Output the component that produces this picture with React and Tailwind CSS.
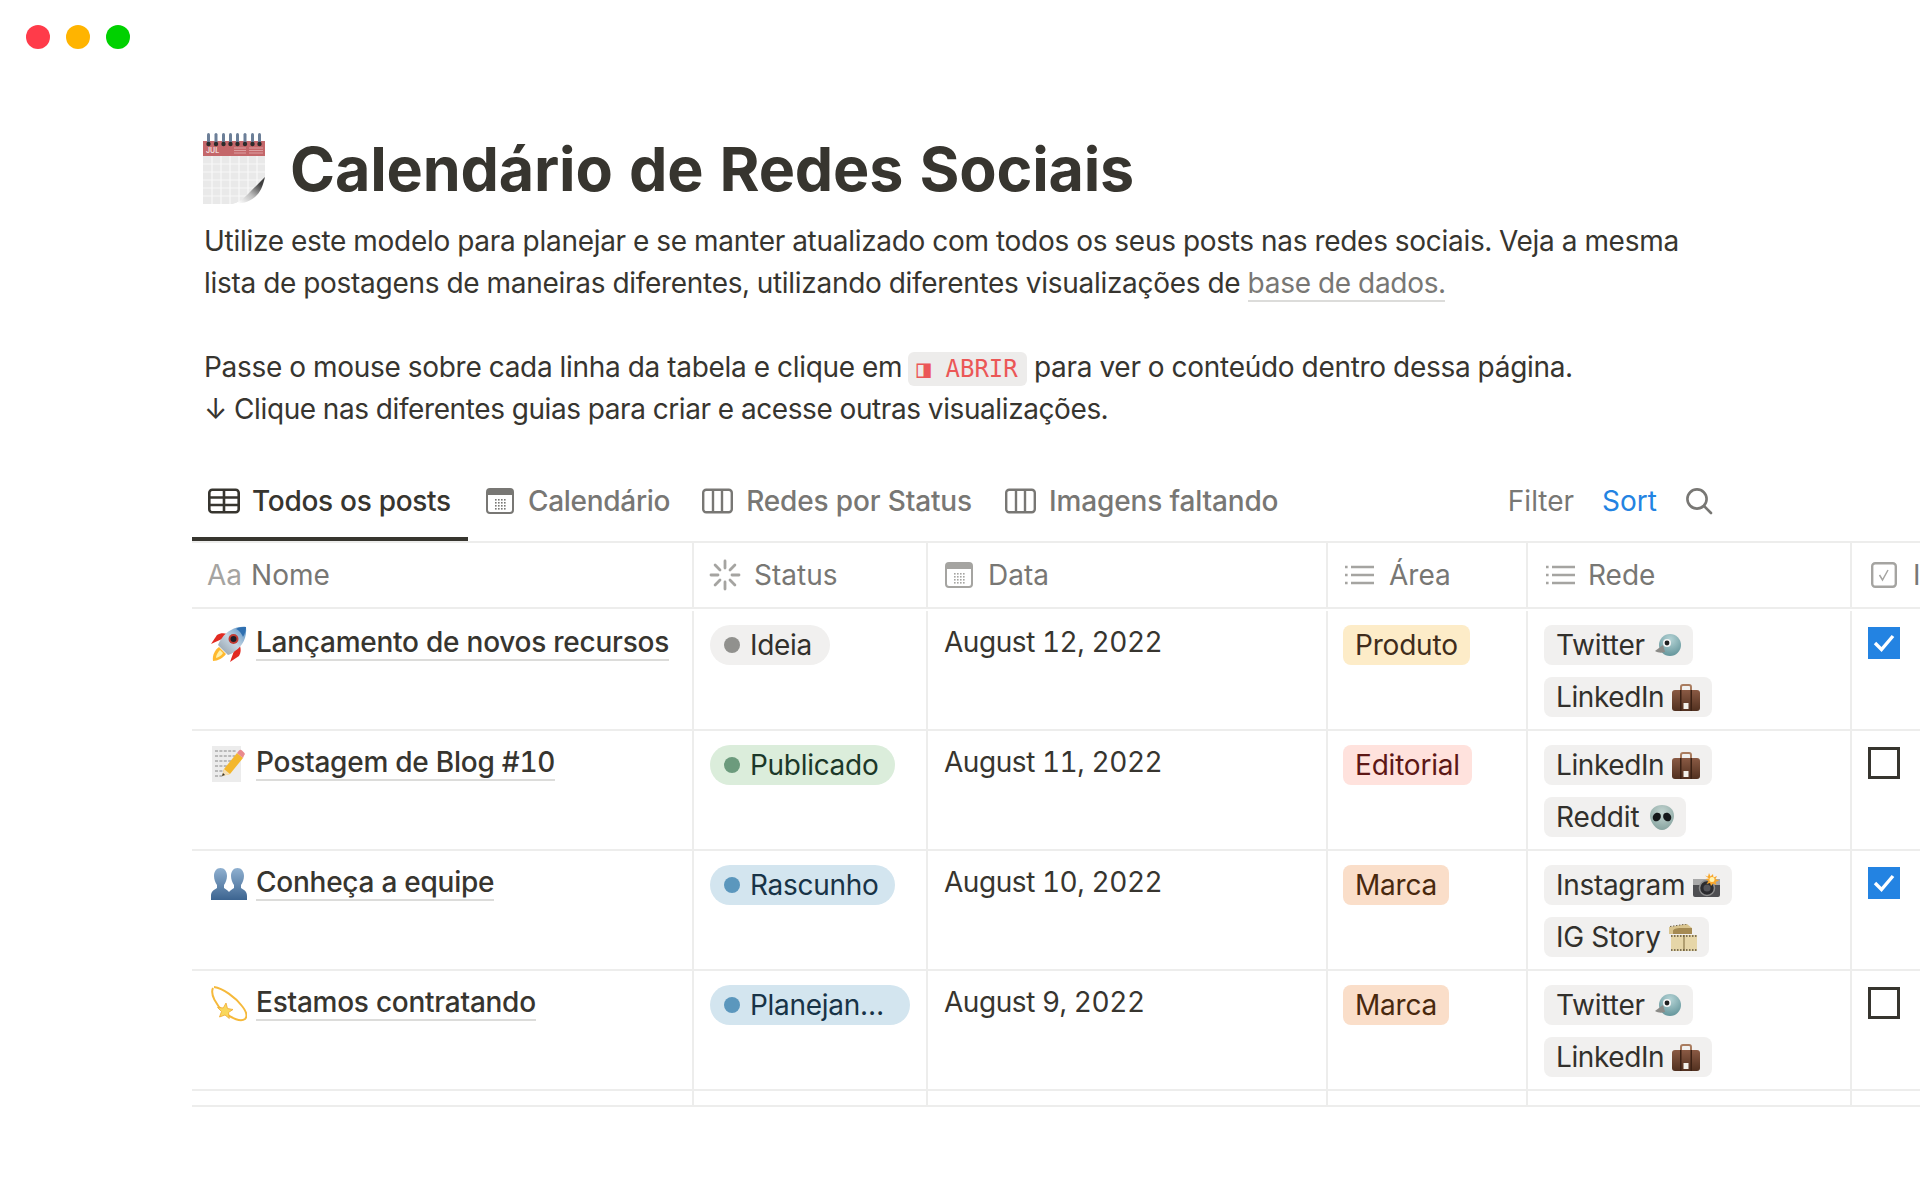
const gridCols = "grid-cols-[502px_234px_400px_200px_324px_100px]";

const TableIcon = () => (
  <svg className="shrink-0" width="32" height="26" viewBox="0 0 32 26" fill="none" stroke="#37352f" strokeWidth="2.6">
    <rect x="1.3" y="1.8" width="29.4" height="22.4" rx="3" />
    <path d="M1.3 9.5h29.4M1.3 17h29.4M16 1.8v22.4" />
  </svg>
);

const CalendarIcon = ({ color = "#787774", width = 28, height = 26 }) => (
  <svg className="shrink-0" width={width} height={height} viewBox="0 0 28 26" fill="none">
    <rect x="1" y="1" width="26" height="24" rx="3" stroke={color} strokeWidth="2" />
    <path d="M1 4a3 3 0 0 1 3-3h20a3 3 0 0 1 3 3v3H1z" fill={color} />
    {[9, 12, 15, 18].map((x) => [11, 14, 17, 20].map((y) => (
      <rect key={`${x}-${y}`} x={x} y={y} width="1.6" height="1.6" fill={color} />
    )))}
  </svg>
);

const ColumnsIcon = () => (
  <svg className="shrink-0" width="31" height="26" viewBox="0 0 31 26" fill="none" stroke="#787774" strokeWidth="2.4">
    <rect x="1.2" y="1.8" width="28.6" height="22.4" rx="3" />
    <path d="M11 1.8v22.4M20 1.8v22.4" />
  </svg>
);

const SearchIcon = () => (
  <svg className="shrink-0" width="28" height="28" viewBox="0 0 28 28" fill="none" stroke="#787774" strokeWidth="2.6" strokeLinecap="round">
    <circle cx="12" cy="12" r="9.6" />
    <path d="M19 19l7 7" />
  </svg>
);

const SpinnerIcon = () => (
  <svg className="shrink-0" width="32" height="32" viewBox="0 0 32 32" fill="none" stroke="#a5a4a1" strokeWidth="2.8" strokeLinecap="round">
    <path d="M16 2v7M16 23v7M2 16h7M23 16h7M6.1 6.1l4.9 4.9M21 21l4.9 4.9M6.1 25.9L11 21M21 11l4.9-4.9" />
  </svg>
);

const ListIcon = () => (
  <svg className="shrink-0" width="29" height="20" viewBox="0 0 29 20" fill="none" stroke="#a5a4a1" strokeWidth="2.4">
    <path d="M6 2h23M6 10h23M6 18h23" />
    <path d="M0 2h2.6M0 10h2.6M0 18h2.6" />
  </svg>
);

const CheckHeadIcon = () => (
  <svg className="shrink-0" width="26" height="26" viewBox="0 0 26 26" fill="none" stroke="#a5a4a1">
    <rect x="1.2" y="1.2" width="23.6" height="23.6" rx="3" strokeWidth="2.4" />
    <path d="M8.5 13l3 5 5.5-10" strokeWidth="1.5" />
  </svg>
);

const AaIcon = () => <span className="text-[#a5a4a1]">Aa</span>;

const CalendarEmoji = () => (
  <svg className="shrink-0" width="62" height="71" viewBox="0 0 62 71">
    <defs>
      <linearGradient id="curl" x1="0.2" y1="1" x2="0.9" y2="0.3">
        <stop offset="0" stopColor="#ffffff" />
        <stop offset="0.5" stopColor="#bdbdbd" />
        <stop offset="1" stopColor="#3f3f3f" />
      </linearGradient>
    </defs>
    <rect x="0" y="23" width="62" height="48" fill="#e9e9e9" />
    <g stroke="#f8f8f8" strokeWidth="1.2">
      <path d="M9 23v48M18 23v48M27 23v48M36 23v48M45 23v48M54 23v48M0 31h62M0 39h62M0 47h62M0 55h62M0 63h62" />
    </g>
    <rect x="0" y="8" width="62" height="15" fill="#c4676a" />
    <text x="3" y="20" fontSize="7" fontWeight="700" fill="#eed6d6">JUL</text>
    <path d="M31 15h12M31 17.500h12M31 20h12M46 15h14M46 17.500h14M46 20h14" stroke="#dca0a2" strokeWidth="1.200" />
    {[4, 11.5, 19, 26, 33, 40.5, 48, 55].map((x) => (
      <g key={x}>
        <rect x={x} y="0" width="3" height="12" rx="1.500" fill="#6c7f98" />
        <circle cx={x + 1.5} cy="11" r="2.200" fill="#2b2b2b" />
      </g>
    ))}
    <path d="M30 71c13-4 24-14 32-27v27z" fill="#ffffff" />
    <path d="M30 71c6-1 11-6 17-12 6-6 10-10 15-15-2 9-5 16-10 20-6 5-14 7-22 7z" fill="url(#curl)" />
  </svg>
);

const RocketEmoji = () => (
  <svg className="shrink-0" width="36" height="36" viewBox="0 0 36 36">
    <defs>
      <linearGradient id="rk" x1="0" y1="1" x2="1" y2="0">
        <stop offset="0" stopColor="#8b98a3" />
        <stop offset="0.5" stopColor="#c7d6e2" />
        <stop offset="1" stopColor="#4f8dc4" />
      </linearGradient>
    </defs>
    <path d="M2 35c-1-6 2-11 6-14l7 7c-3 4-8 7-13 7z" fill="#ffb92e" />
    <path d="M5 32c0-3 2-6 4-8l3 3c-2 3-4 4-7 5z" fill="#fff1a8" />
    <path d="M11 13L0 18l6-9c3-2 7-2 10-1z" fill="#e22b22" />
    <path d="M23 25l-4 11 9-6c2-3 2-7 1-10z" fill="#e22b22" />
    <path d="M35 1C25 0 16 5 11 12c-2 2-3 5-4 7l10 10c3-1 5-2 7-4 8-5 12-14 11-24z" fill="url(#rk)" />
    <path d="M35 1c-4 0-7 0-10 2 3 1 6 5 7 8 2-3 3-7 3-10z" fill="#2f6fb0" />
    <circle cx="22.500" cy="13" r="5" fill="#c23b33" />
    <circle cx="22.500" cy="13" r="3" fill="#1e1e28" />
  </svg>
);

const MemoEmoji = () => (
  <svg className="shrink-0" width="34" height="36" viewBox="0 0 34 36">
    <rect x="1" y="0" width="29" height="36" fill="#ececec" />
    <g stroke="#7d7d7d" strokeWidth="0.9" strokeDasharray="3 1.400">
      <path d="M4 5h22M4 10h20M4 15h16M4 20h12M4 25h9M4 30h8" />
    </g>
    <path d="M11 30l2-7L26 7l6 5-13 16z" fill="#f3b72d" />
    <path d="M11 30l2-7 6 5z" fill="#f5dfb5" />
    <path d="M11 30l1-3 2 2z" fill="#333333" />
    <path d="M26 7l2-2.500a2 2 0 0 1 3 0l2 2a2 2 0 0 1 0 3L32 12z" fill="#e98a8e" />
  </svg>
);

const BustsEmoji = () => (
  <svg className="shrink-0" width="36" height="32" viewBox="0 0 36 32">
    <defs>
      <linearGradient id="bust" x1="0" y1="0" x2="0" y2="1">
        <stop offset="0" stopColor="#8fb0d0" />
        <stop offset="1" stopColor="#3c6490" />
      </linearGradient>
    </defs>
    <path d="M9.500 0c4 0 6.500 3.500 6.500 8 0 3.500-1.500 7-3 9v3c2 1.500 4 2.500 5 4 1-1.500 3-2.500 5-4v-3c-1.500-2-3-5.500-3-9 0-4.500 2.500-8 6.500-8s6.500 3.500 6.500 8c0 3.500-1.500 7-3 9v3c3 2 6 3 6 8v4H0v-4c0-5 3-6 6-8v-3c-1.500-2-3-5.500-3-9 0-4.500 2.500-8 6.500-8z" fill="url(#bust)" />
  </svg>
);

const DizzyEmoji = () => (
  <svg className="shrink-0" width="36" height="36" viewBox="0 0 36 36" fill="none">
    <path d="M2 2c-3 6 3 17 11 24 8 7 17 10 21 7 3-3 1-8-3-13C25 12 12 2 3 1" stroke="#f5b93b" strokeWidth="2" />
    <path d="M15 17l1.500 5.500 5.500 1-4.500 3 .8 6-4.300-3.500-5.500 2 2-5.500-4-4 5.800.4z" fill="#f9d75b" stroke="#f0a92e" strokeWidth="0.8" />
  </svg>
);

const BirdEmoji = () => (
  <svg className="shrink-0" width="26" height="22" viewBox="0 0 26 22">
    <defs>
      <radialGradient id="bird" cx="0.5" cy="0.25" r="0.8">
        <stop offset="0" stopColor="#b6d4d6" />
        <stop offset="1" stopColor="#5f9298" />
      </radialGradient>
    </defs>
    <circle cx="15" cy="11" r="11" fill="url(#bird)" />
    <path d="M8 11L0 17c3 2 7 2 10 1z" fill="#8b8b88" />
    <circle cx="12" cy="9" r="4" fill="#f4f4f4" />
    <circle cx="12" cy="9" r="2.400" fill="#1f1f1f" />
  </svg>
);

const BriefcaseEmoji = () => (
  <svg className="shrink-0" width="28" height="27" viewBox="0 0 28 27">
    <defs>
      <linearGradient id="case" x1="0" y1="0" x2="0" y2="1">
        <stop offset="0" stopColor="#8a5a44" />
        <stop offset="1" stopColor="#51301f" />
      </linearGradient>
    </defs>
    <path d="M9 6V3a2 2 0 0 1 2-2h6a2 2 0 0 1 2 2v3" fill="none" stroke="#a97c5f" strokeWidth="2" />
    <rect x="0" y="6" width="28" height="21" rx="3" fill="url(#case)" />
    <path d="M8 6h1.500v21H8zM18.500 6H20v21h-1.500z" fill="#3b2114" />
    <rect x="11.500" y="19" width="5" height="6" fill="#f2f0ea" />
  </svg>
);

const AlienEmoji = () => (
  <svg className="shrink-0" width="24" height="25" viewBox="0 0 24 25">
    <defs>
      <radialGradient id="alien" cx="0.5" cy="0.3" r="0.8">
        <stop offset="0" stopColor="#c5d6d2" />
        <stop offset="1" stopColor="#7f9d99" />
      </radialGradient>
    </defs>
    <path d="M12 0c7 0 12 4 12 11 0 6-6 14-12 14S0 17 0 11C0 4 5 0 12 0z" fill="url(#alien)" />
    <ellipse cx="6.800" cy="12" rx="3.800" ry="4.600" transform="rotate(35 6.800 12)" fill="#15181a" />
    <ellipse cx="17.200" cy="12" rx="3.800" ry="4.600" transform="rotate(-35 17.200 12)" fill="#15181a" />
  </svg>
);

const CameraEmoji = () => (
  <svg className="shrink-0" width="27" height="24" viewBox="0 0 27 24">
    <rect x="0" y="6" width="27" height="18" rx="2" fill="#4f4f52" />
    <rect x="0" y="6" width="27" height="6" fill="#a9a9a9" />
    <circle cx="14" cy="15" r="7.500" fill="#2b2b2e" stroke="#8d8d8d" strokeWidth="1.500" />
    <circle cx="14" cy="15" r="3.500" fill="#55555a" />
    <path d="M16 0l1.500 3.500L20 1l.5 3.500L24 3l-1.500 3L26 7.500 22.500 9l1 3-3.500-1.500L18 13l-1-3-3.500 1 2-3-3-2 3.500-.500L12 2.500l3 1z" fill="#f9a72b" />
    <circle cx="19" cy="6.500" r="2.500" fill="#fff3b0" />
  </svg>
);

const FilmEmoji = () => (
  <svg className="shrink-0" width="28" height="27" viewBox="0 0 28 27">
    <path d="M0 3l18-3 5 4v6H0z" fill="#d9c48e" />
    <path d="M1 2.500l17-2.500" stroke="#6f6248" strokeWidth="1" strokeDasharray="1.500 1.500" />
    <path d="M4 7c0-2 3-3 8-3h11v6H4z" fill="#a58a52" />
    <rect x="2" y="11" width="26" height="16" fill="#e6d6a8" />
    <path d="M15 11v16" stroke="#8d7a4c" strokeWidth="1.200" />
    <path d="M2 12h26M2 26h26" stroke="#5c5039" strokeWidth="1.600" strokeDasharray="1.500 1.500" />
  </svg>
);

const Twitter = () => <Tag label="Twitter" emoji={<BirdEmoji />} extra="gap-[10px] tracking-[-0.2px]" />;
const LinkedIn = () => <Tag label="LinkedIn" emoji={<BriefcaseEmoji />} extra="gap-[8px] tracking-[-0.4px]" />;
const Reddit = () => <Tag label="Reddit" emoji={<AlienEmoji />} extra="gap-[10px] tracking-[-0.1px]" />;
const Instagram = () => <Tag label="Instagram" emoji={<CameraEmoji />} extra="gap-[8px] tracking-[-0.3px]" />;
const IgStory = () => <Tag label="IG Story" emoji={<FilmEmoji />} extra="gap-[8px] tracking-[-0.2px]" />;

const Tag = ({ label, emoji, extra }) => (
  <span className={`flex h-10 w-fit items-center rounded-lg bg-[#f1f0ef] px-3 text-[#32302c] ${extra}`}>
    {label}
    {emoji}
  </span>
);

const posts = [
  {
    name: "Lançamento de novos recursos",
    emoji: <RocketEmoji />,
    status: "Ideia",
    statusClass: "w-fit bg-[#f1f0ef] text-[#32302c] pr-[18px]",
    dotClass: "bg-[#91918e]",
    date: "August 12, 2022",
    area: "Produto",
    areaClass: "bg-[#fdecc8] text-[#402c1b]",
    tags: [<Twitter key="a" />, <LinkedIn key="b" />],
    checked: true,
  },
  {
    name: "Postagem de Blog #10",
    emoji: <MemoEmoji />,
    status: "Publicado",
    statusClass: "w-fit bg-[#dbeddb] text-[#1c3829] pr-[17px]",
    dotClass: "bg-[#6c9b7d]",
    date: "August 11, 2022",
    area: "Editorial",
    areaClass: "bg-[#ffe2dd] text-[#5d1715]",
    tags: [<LinkedIn key="a" />, <Reddit key="b" />],
    checked: false,
  },
  {
    name: "Conheça a equipe",
    emoji: <BustsEmoji />,
    status: "Rascunho",
    statusClass: "w-fit bg-[#d3e5ef] text-[#183347] pr-[17px]",
    dotClass: "bg-[#5b97bd]",
    date: "August 10, 2022",
    area: "Marca",
    areaClass: "bg-[#fadec9] text-[#49290e]",
    tags: [<Instagram key="a" />, <IgStory key="b" />],
    checked: true,
  },
  {
    name: "Estamos contratando",
    emoji: <DizzyEmoji />,
    status: "Planejan…",
    statusClass: "w-[200px] bg-[#d3e5ef] text-[#183347]",
    dotClass: "bg-[#5b97bd]",
    date: "August 9, 2022",
    area: "Marca",
    areaClass: "bg-[#fadec9] text-[#49290e]",
    tags: [<Twitter key="a" />, <LinkedIn key="b" />],
    checked: false,
  },
];

const columns = [
  { label: "Nome", icon: <AaIcon />, pad: "pl-[15px] gap-[9px]" },
  { label: "Status", icon: <SpinnerIcon />, pad: "pl-[15px] gap-[13px]" },
  { label: "Data", icon: <CalendarIcon color="#a5a4a1" />, pad: "pl-[17px] gap-[15px]" },
  { label: "Área", icon: <ListIcon />, pad: "pl-[17px] gap-[15px]" },
  { label: "Rede", icon: <ListIcon />, pad: "pl-[18px] gap-[13px]" },
  { label: "Imagem", icon: <CheckHeadIcon />, pad: "pl-[19px] gap-[16px]" },
];

const Checkbox = ({ checked }) =>
  checked ? (
    <span className="flex h-8 w-8 items-center justify-center bg-[#2383e2]">
      <svg width="22" height="18" viewBox="0 0 22 18" fill="none" stroke="#ffffff" strokeWidth="3.4">
        <path d="M2 9l6.500 6.500L20 2" />
      </svg>
    </span>
  ) : (
    <span className="block h-8 w-8 border-[3px] border-[#37352f]" />
  );

export default function App() {
  return (
    <div className="h-[1200px] w-[1920px] overflow-hidden bg-white text-[28px] leading-[42px] tabular-nums text-[#37352f] [font-family:Inter,sans-serif]">
      <div className="flex gap-4 pl-[26px] pt-[25px]">
        <span className="h-6 w-6 rounded-full bg-[#ff3b4a]" />
        <span className="h-6 w-6 rounded-full bg-[#ffb400]" />
        <span className="h-6 w-6 rounded-full bg-[#00d100]" />
      </div>

      <div className="pl-[192px] pt-[84px]">
        <div className="flex h-[71px] items-center pl-[11px]">
          <CalendarEmoji />
          <h1 className="ml-[25px] mt-[2px] text-[61px] font-bold leading-[71px] tracking-[-0.18px]">Calendário de Redes Sociais</h1>
        </div>

        <div className="whitespace-nowrap pl-[12px] pt-[16px] tracking-[-0.29px]">
          <p>Utilize este modelo para planejar e se manter atualizado com todos os seus posts nas redes sociais. Veja a mesma</p>
          <p>
            lista de postagens de maneiras diferentes, utilizando diferentes visualizações de{" "}
            <span className="border-b-2 border-[#dcdcda] text-[#787774]">base de dados.</span>
          </p>
          <p className="h-[42px]" />
          <p>
            Passe o mouse sobre cada linha da tabela e clique em{" "}
            <code className="ml-[-2px] rounded-md bg-[#edeceb] px-[9px] py-[3px] text-[24px] leading-none tracking-normal text-[#eb5757] [font-family:'DejaVu_Sans_Mono',monospace]">◨ ABRIR</code>{" "}
            para ver o conteúdo dentro dessa página.
          </p>
          <p className="tracking-[-0.4px]">↓ Clique nas diferentes guias para criar e acesse outras visualizações.</p>
        </div>

        <div className="mt-[39px] flex h-[72px] items-start text-[#787774]">
          <div className="flex h-[72px] w-[276px] items-center gap-[12px] border-b-4 border-[#37352f] pb-1 pl-4 font-medium tracking-[-0.3px] text-[#37352f]">
            <TableIcon />
            Todos os posts
          </div>
          <div className="ml-[18px] flex h-[64px] items-center gap-[14px] font-medium tracking-[-0.3px]">
            <CalendarIcon />
            Calendário
          </div>
          <div className="ml-[32px] flex h-[64px] items-center gap-[13px] font-medium tracking-[-0.15px]">
            <ColumnsIcon />
            Redes por Status
          </div>
          <div className="ml-[33px] flex h-[64px] items-center gap-[13px] font-medium tracking-[-0.15px]">
            <ColumnsIcon />
            Imagens faltando
          </div>
          <div className="ml-auto mr-[207px] flex h-[64px] items-center">
            <span className="mr-[28px]">Filter</span>
            <span className="mr-[28px] text-[#2383e2]">Sort</span>
            <SearchIcon />
          </div>
        </div>

        <div className={`grid h-[68px] ${gridCols} border-y-2 border-[#ededec] text-[#787774]`}>
          {columns.map((col) => (
            <div key={col.label} className={`flex items-center overflow-hidden border-r-2 border-[#ededec] ${col.pad}`}>
              {col.icon}
              {col.label}
            </div>
          ))}
        </div>

        <div className="h-[2px]" />

        {posts.map((post) => (
          <div key={post.name} className={`grid h-[120px] ${gridCols} border-b-2 border-[#ededec]`}>
            <div className="flex border-r-2 border-[#ededec] pl-[19px] pt-[11px]">
              <span className="flex h-[44px] w-[45px] shrink-0 items-center">{post.emoji}</span>
              <span className="font-medium leading-[40px] tracking-[-0.25px]">
                <span className="border-b-2 border-[#dcdcda]">{post.name}</span>
              </span>
            </div>
            <div className="border-r-2 border-[#ededec] pl-[16px] pt-[14px]">
              <span className={`flex h-10 items-center gap-[10px] rounded-full pl-[14px] tracking-[-0.3px] ${post.statusClass}`}>
                <span className={`h-4 w-4 rounded-full ${post.dotClass}`} />
                {post.status}
              </span>
            </div>
            <div className="border-r-2 border-[#ededec] pl-[16px] pt-[11px] leading-[40px] tracking-[-0.45px]">{post.date}</div>
            <div className="border-r-2 border-[#ededec] pl-[15px] pt-[14px]">
              <span className={`flex h-10 w-fit items-center rounded-lg px-3 tracking-[-0.2px] ${post.areaClass}`}>{post.area}</span>
            </div>
            <div className="flex flex-col gap-3 border-r-2 border-[#ededec] pl-[16px] pt-[14px]">{post.tags}</div>
            <div className="pl-[16px] pt-[16px]">
              <Checkbox checked={post.checked} />
            </div>
          </div>
        ))}

        <div className={`grid h-[16px] ${gridCols} border-b-2 border-[#ededec]`}>
          {columns.map((col) => (
            <div key={col.label} className="border-r-2 border-[#ededec] last:border-r-0" />
          ))}
        </div>
      </div>
    </div>
  );
}
